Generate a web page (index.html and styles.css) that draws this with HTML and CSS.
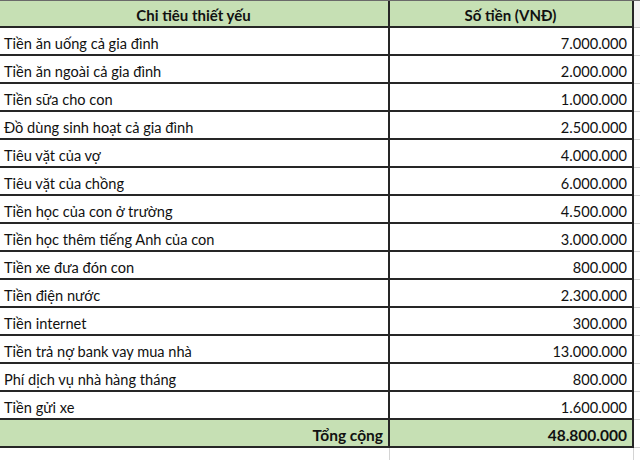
FILE: index.html
```html
<!DOCTYPE html>
<html lang="vi">
<head>
<meta charset="utf-8">
<link rel="stylesheet" href="styles.css">
</head>
<body>
<div class="sheet">
  <div class="row head">
    <div class="c1 center">Chi tiêu thiết yếu</div>
    <div class="c2 center">Số tiền (VNĐ)</div>
    <div class="c3"></div>
  </div>
  <div class="row"><div class="c1">Tiền ăn uống cả gia đình</div><div class="c2 num">7.000.000</div><div class="c3"></div></div>
  <div class="row"><div class="c1">Tiền ăn ngoài cả gia đình</div><div class="c2 num">2.000.000</div><div class="c3"></div></div>
  <div class="row"><div class="c1">Tiền sữa cho con</div><div class="c2 num">1.000.000</div><div class="c3"></div></div>
  <div class="row"><div class="c1">Đồ dùng sinh hoạt cả gia đình</div><div class="c2 num">2.500.000</div><div class="c3"></div></div>
  <div class="row"><div class="c1">Tiêu vặt của vợ</div><div class="c2 num">4.000.000</div><div class="c3"></div></div>
  <div class="row"><div class="c1">Tiêu vặt của chồng</div><div class="c2 num">6.000.000</div><div class="c3"></div></div>
  <div class="row"><div class="c1">Tiền học của con ở trường</div><div class="c2 num">4.500.000</div><div class="c3"></div></div>
  <div class="row"><div class="c1">Tiền học thêm tiếng Anh của con</div><div class="c2 num">3.000.000</div><div class="c3"></div></div>
  <div class="row"><div class="c1">Tiền xe đưa đón con</div><div class="c2 num">800.000</div><div class="c3"></div></div>
  <div class="row"><div class="c1">Tiền điện nước</div><div class="c2 num">2.300.000</div><div class="c3"></div></div>
  <div class="row"><div class="c1">Tiền internet</div><div class="c2 num">300.000</div><div class="c3"></div></div>
  <div class="row"><div class="c1">Tiền trả nợ bank vay mua nhà</div><div class="c2 num">13.000.000</div><div class="c3"></div></div>
  <div class="row"><div class="c1">Phí dịch vụ nhà hàng tháng</div><div class="c2 num">800.000</div><div class="c3"></div></div>
  <div class="row"><div class="c1">Tiền gửi xe</div><div class="c2 num">1.600.000</div><div class="c3"></div></div>
  <div class="row foot">
    <div class="c1 num">Tổng cộng</div>
    <div class="c2 num">48.800.000</div>
    <div class="c3"></div>
  </div>
  <div class="row tail"><div class="c1"></div><div class="c2"></div><div class="c3"></div></div>
</div>
</body>
</html>
```
FILE: styles.css
```css
html, body {
  margin: 0;
  padding: 0;
  background: #ffffff;
}
.sheet {
  width: 640px;
  height: 460px;
  overflow: hidden;
  font-family: Lato, "Open Sans", sans-serif;
  font-size: 14.6px;
  color: #111;
  border-top: 1px solid #6a6a6a;
  box-sizing: border-box;
}
.row {
  display: grid;
  grid-template-columns: 390px 244px 6px;
  height: 28px;
}
.row > div {
  box-sizing: border-box;
  border-bottom: 2px solid #262626;
  display: flex;
  align-items: flex-end;
  padding: 0 5px 2px 4px;
  white-space: nowrap;
}
.row .c1 {
  border-right: 2px solid #262626;
}
.row .c2 {
  border-right: 2px solid #262626;
}
.row .c3 {
  border-bottom: 1px solid #d4d4d4;
  padding: 0;
}
.head {
  height: 27px;
}
.head .c1, .head .c2 {
  background: #c6e0b4;
  font-weight: bold;
  font-size: 15px;
}
.head .c3 {
  background: #f3f3f3;
  border-bottom: 1px solid #c8c8c8;
}
.center {
  justify-content: center;
}
.num {
  justify-content: flex-end;
}
.foot .c1, .foot .c2 {
  background: #c6e0b4;
  font-weight: bold;
  font-size: 15.5px;
}
.tail > div {
  border-bottom: none;
}
.tail .c1 {
  border-right: 1px solid #d4d4d4;
}
.tail .c2 {
  border-right: 1px solid #d4d4d4;
}
```
